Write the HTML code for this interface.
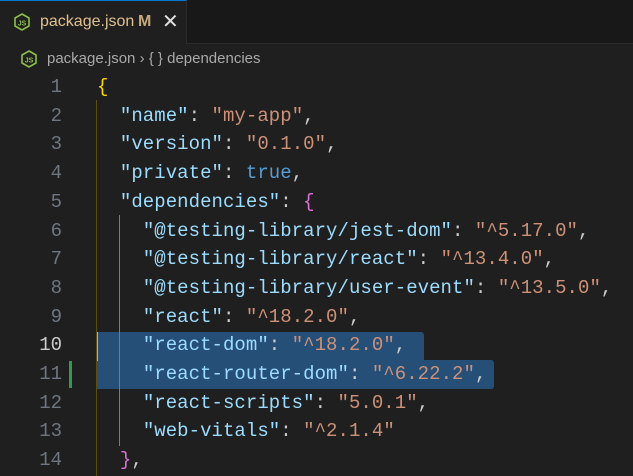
<!DOCTYPE html>
<html><head><meta charset="utf-8"><style>
body{margin:0;width:633px;height:476px;background:#1f1f1f;overflow:hidden;font-family:"Liberation Sans",sans-serif;position:relative}
.tabbar{position:absolute;left:0;top:0;width:633px;height:43px;background:#181818;border-bottom:1px solid #2b2b2b}
.tab{position:absolute;left:0;top:0;width:187px;height:44px;background:#1f1f1f;border-top:1px solid #0078d4;border-right:1px solid #2b2b2b;box-sizing:border-box}
.js{position:absolute;width:16px;height:18px}
.t{position:absolute;color:#e2c08d;font-size:16px}
.bc{position:absolute;top:50px;left:47px;color:#a9a9a9;font-size:15px}
.code{position:absolute;left:0;top:73px;font-family:"Liberation Mono",monospace;font-size:19px;}
.ln{position:absolute;width:62px;text-align:right;color:#6e7681;height:28.7px;line-height:28.7px}
.l{position:absolute;left:97px;white-space:pre;height:28.7px;line-height:28.7px;color:#cccccc;letter-spacing:0.05px}
.k{color:#9cdcfe}.s{color:#ce9178}.b{color:#569cd6}.y{color:#ffd700}.m{color:#da70d6}
</style></head><body>
<div class="tabbar"></div>
<div class="tab"></div>
<svg class="js" style="left:14px;top:13px" viewBox="0 0 16 18"><path d="M8 1 L15 5 L15 13 L8 17 L1 13 L1 5 Z" fill="none" stroke="#8dc149" stroke-width="1.6"/><text x="8" y="12.5" font-size="7" fill="#8dc149" text-anchor="middle" font-family="Liberation Sans" font-weight="bold">JS</text></svg>
<div class="t" style="left:40px;top:13px">package.json</div>
<div class="t" style="left:138px;top:13px;font-weight:bold;color:#c6a97a">M</div>
<div style="position:absolute;left:162px;top:9px;color:#e0e0e0;font-size:20px">✕</div>
<svg class="js" style="left:21px;top:50px" viewBox="0 0 16 18"><path d="M8 1 L15 5 L15 13 L8 17 L1 13 L1 5 Z" fill="none" stroke="#8dc149" stroke-width="1.6"/><text x="8" y="12.5" font-size="7" fill="#8dc149" text-anchor="middle" font-family="Liberation Sans" font-weight="bold">JS</text></svg>
<div class="bc">package.json <span style="color:#a9a9a9">›</span> { } dependencies</div>
<!-- selection -->
<div style="position:absolute;left:97px;top:332px;width:327px;height:29px;background:#264f78;border-radius:0 3px 0 0"></div>
<div style="position:absolute;left:97px;top:360px;width:397px;height:29px;background:#264f78;border-radius:0 3px 3px 0"></div>
<div style="position:absolute;left:96px;top:332px;width:2px;height:29px;background:#aeafad"></div>
<div style="position:absolute;left:69px;top:361px;width:3px;height:27px;background:#2ea043"></div>
<!-- guides -->
<div style="position:absolute;left:96px;top:100px;width:1px;height:376px;background:#5c4d14"></div>
<div style="position:absolute;left:119px;top:215px;width:1px;height:231px;background:#b0599e"></div>
<div class="code">
<div class="ln" style="top:0">1</div><div class="ln" style="top:28.7px">2</div><div class="ln" style="top:57.4px">3</div><div class="ln" style="top:86.1px">4</div><div class="ln" style="top:114.8px">5</div><div class="ln" style="top:143.5px">6</div><div class="ln" style="top:172.2px">7</div><div class="ln" style="top:200.9px">8</div><div class="ln" style="top:229.6px">9</div><div class="ln" style="top:258.3px;color:#cccccc">10</div><div class="ln" style="top:287px">11</div><div class="ln" style="top:315.7px">12</div><div class="ln" style="top:344.4px">13</div><div class="ln" style="top:373.1px">14</div>
<div class="l" style="top:0"><span class="y">{</span></div>
<div class="l" style="top:28.7px">  <span class="k">"name"</span>: <span class="s">"my-app"</span>,</div>
<div class="l" style="top:57.4px">  <span class="k">"version"</span>: <span class="s">"0.1.0"</span>,</div>
<div class="l" style="top:86.1px">  <span class="k">"private"</span>: <span class="b">true</span>,</div>
<div class="l" style="top:114.8px">  <span class="k">"dependencies"</span>: <span class="m">{</span></div>
<div class="l" style="top:143.5px">    <span class="k">"@testing-library/jest-dom"</span>: <span class="s">"^5.17.0"</span>,</div>
<div class="l" style="top:172.2px">    <span class="k">"@testing-library/react"</span>: <span class="s">"^13.4.0"</span>,</div>
<div class="l" style="top:200.9px">    <span class="k">"@testing-library/user-event"</span>: <span class="s">"^13.5.0"</span>,</div>
<div class="l" style="top:229.6px">    <span class="k">"react"</span>: <span class="s">"^18.2.0"</span>,</div>
<div class="l" style="top:258.3px">    <span class="k">"react-dom"</span>: <span class="s">"^18.2.0"</span>,</div>
<div class="l" style="top:287px">    <span class="k">"react-router-dom"</span>: <span class="s">"^6.22.2"</span>,</div>
<div class="l" style="top:315.7px">    <span class="k">"react-scripts"</span>: <span class="s">"5.0.1"</span>,</div>
<div class="l" style="top:344.4px">    <span class="k">"web-vitals"</span>: <span class="s">"^2.1.4"</span></div>
<div class="l" style="top:373.1px">  <span class="m">}</span>,</div>
</div>
</body></html>
